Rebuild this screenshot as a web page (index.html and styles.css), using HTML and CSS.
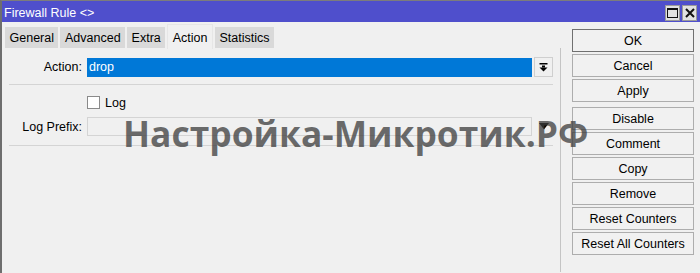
FILE: index.html
```html
<!DOCTYPE html>
<html lang="en">
<head>
    <meta charset="UTF-8">
    <meta name="viewport" content="width=device-width, initial-scale=1.0">
    <title>Firewall Rule</title>
    <link rel="stylesheet" href="styles.css">
</head>
<body>
    <div class="window">
        <div class="titlebar">
            <span class="title">Firewall Rule &lt;&gt;</span>
            <div class="winbtns">
                <span class="winbtn">
                    <svg width="11" height="10" viewBox="0 0 11 10"><rect x="0.5" y="0.5" width="10" height="9" fill="none" stroke="#111" stroke-width="1"/><rect x="0" y="0" width="11" height="2" fill="#111"/></svg>
                </span>
                <span class="winbtn">
                    <svg width="10" height="10" viewBox="0 0 10 10"><path d="M1 1 L9 9 M9 1 L1 9" stroke="#111" stroke-width="2"/></svg>
                </span>
            </div>
        </div>
        <div class="content">
            <div class="main">
                <div class="tabs">
                    <div class="tab">General</div>
                    <div class="tab">Advanced</div>
                    <div class="tab">Extra</div>
                    <div class="tab active">Action</div>
                    <div class="tab">Statistics</div>
                </div>
                <div class="panel">
                    <div class="row">
                        <label class="label">Action:</label>
                        <div class="field selected">drop</div>
                        <div class="trail">
                            <span class="dropbtn">
                                <svg width="9" height="9" viewBox="0 0 9 9"><rect x="0.5" y="0" width="8" height="1.5" fill="#000"/><rect x="3" y="2.5" width="3" height="2" fill="#000"/><path d="M0.5 4.5 H8.5 L4.5 8.5 Z" fill="#000"/></svg>
                            </span>
                        </div>
                    </div>
                    <div class="sep"></div>
                    <div class="row check-row">
                        <span class="label"></span>
                        <span class="checkbox"></span>
                        <span class="check-text">Log</span>
                    </div>
                    <div class="row prefix-row">
                        <label class="label">Log Prefix:</label>
                        <div class="field disabled"></div>
                        <div class="trail">
                            <svg width="10" height="7" viewBox="0 0 10 7"><path d="M0 0 H10 L5 6.5 Z" fill="#000"/></svg>
                        </div>
                    </div>
                    <div class="sep"></div>
                </div>
            </div>
            <div class="side">
                <button class="btn default">OK</button>
                <button class="btn">Cancel</button>
                <button class="btn group-end">Apply</button>
                <button class="btn">Disable</button>
                <button class="btn">Comment</button>
                <button class="btn">Copy</button>
                <button class="btn">Remove</button>
                <button class="btn">Reset Counters</button>
                <button class="btn">Reset All Counters</button>
            </div>
        </div>
        <div class="watermark">Настройка-Микротик.РФ</div>
    </div>
</body>
</html>
```

FILE: styles.css
```css
* {
    box-sizing: border-box;
}

body {
    margin: 0;
    background-color: #f0f0f0;
    font-family: 'Liberation Sans', Arial, sans-serif;
    font-size: 12.5px;
    color: #000;
}

.window {
    position: relative;
    height: 273px;
    border-top: 1px solid #7c7c7c;
    border-left: 2px solid #6e6e6e;
    overflow: hidden;
}

.titlebar {
    display: flex;
    align-items: flex-start;
    height: 21px;
    padding: 3px 3px 0 2px;
    background-color: #4f4fcc;
    color: #ffffff;
}

.title {
    line-height: 18px;
}

.winbtns {
    display: flex;
    gap: 2px;
    margin-left: auto;
    margin-top: 1px;
}

.winbtn {
    display: flex;
    align-items: center;
    justify-content: center;
    width: 15px;
    height: 16px;
    background-color: #e1e1e1;
    border: 1px solid #9a9a9a;
}

.content {
    display: flex;
}

.main {
    width: 559px;
}

.tabs {
    display: flex;
    align-items: flex-end;
    gap: 2px;
    height: 26px;
    padding-left: 3px;
}

.tab {
    height: 21px;
    padding: 3px 4.5px 0;
    line-height: 16px;
    background-color: #d9d9d9;
}

.tab.active {
    height: 25px;
    margin-bottom: -1px;
    padding-top: 5px;
    background-color: #f0f0f0;
    border: 1px solid #e6e6e6;
    border-bottom: none;
}

.panel {
    height: 224px;
    padding-top: 9px;
    border-right: 1px solid #c4c4c4;
}

.row {
    display: flex;
    align-items: center;
    padding-right: 7px;
}

.label {
    width: 80px;
    margin-right: 5px;
    text-align: right;
}

.field {
    flex: 1;
    height: 19px;
    line-height: 19px;
    padding-left: 2px;
}

.field.selected {
    background-color: #0078d7;
    color: #ffffff;
}

.field.disabled {
    height: 19px;
    border: 1px solid #d4d4d4;
}

.trail {
    display: flex;
    align-items: center;
    justify-content: center;
    width: 21px;
    padding-left: 2px;
}

.dropbtn {
    display: flex;
    align-items: center;
    justify-content: center;
    width: 19px;
    height: 20px;
    border: 1px solid #cfcfcf;
}

.sep {
    height: 1px;
    margin: 7px 7px 0;
    background-color: #d4d4d4;
}

.check-row {
    margin-top: 11px;
    height: 13px;
}

.checkbox {
    width: 13px;
    height: 13px;
    background-color: #ffffff;
    border: 1px solid #8a8a8a;
    margin-right: 5px;
}

.prefix-row {
    margin-top: 8px;
}

.prefix-row + .sep {
    margin-top: 9px;
}

.side {
    display: flex;
    flex-direction: column;
    width: 139px;
    padding: 7px 0 0 11px;
}

.btn {
    width: 122px;
    height: 23px;
    margin: 0 0 2px;
    padding: 0;
    font-family: inherit;
    font-size: 12.5px;
    color: #000;
    background-color: #f1f1f1;
    border: 1px solid #adadad;
    border-radius: 0;
}

.btn.default {
    border-color: #707070;
}

.btn.group-end {
    margin-bottom: 5px;
}

.watermark {
    position: absolute;
    left: 121px;
    top: 114px;
    font-family: 'Open Sans', sans-serif;
    font-weight: bold;
    font-size: 35.4px;
    line-height: 36px;
    color: rgba(60, 60, 60, 0.75);
    white-space: nowrap;
    pointer-events: none;
}
```
